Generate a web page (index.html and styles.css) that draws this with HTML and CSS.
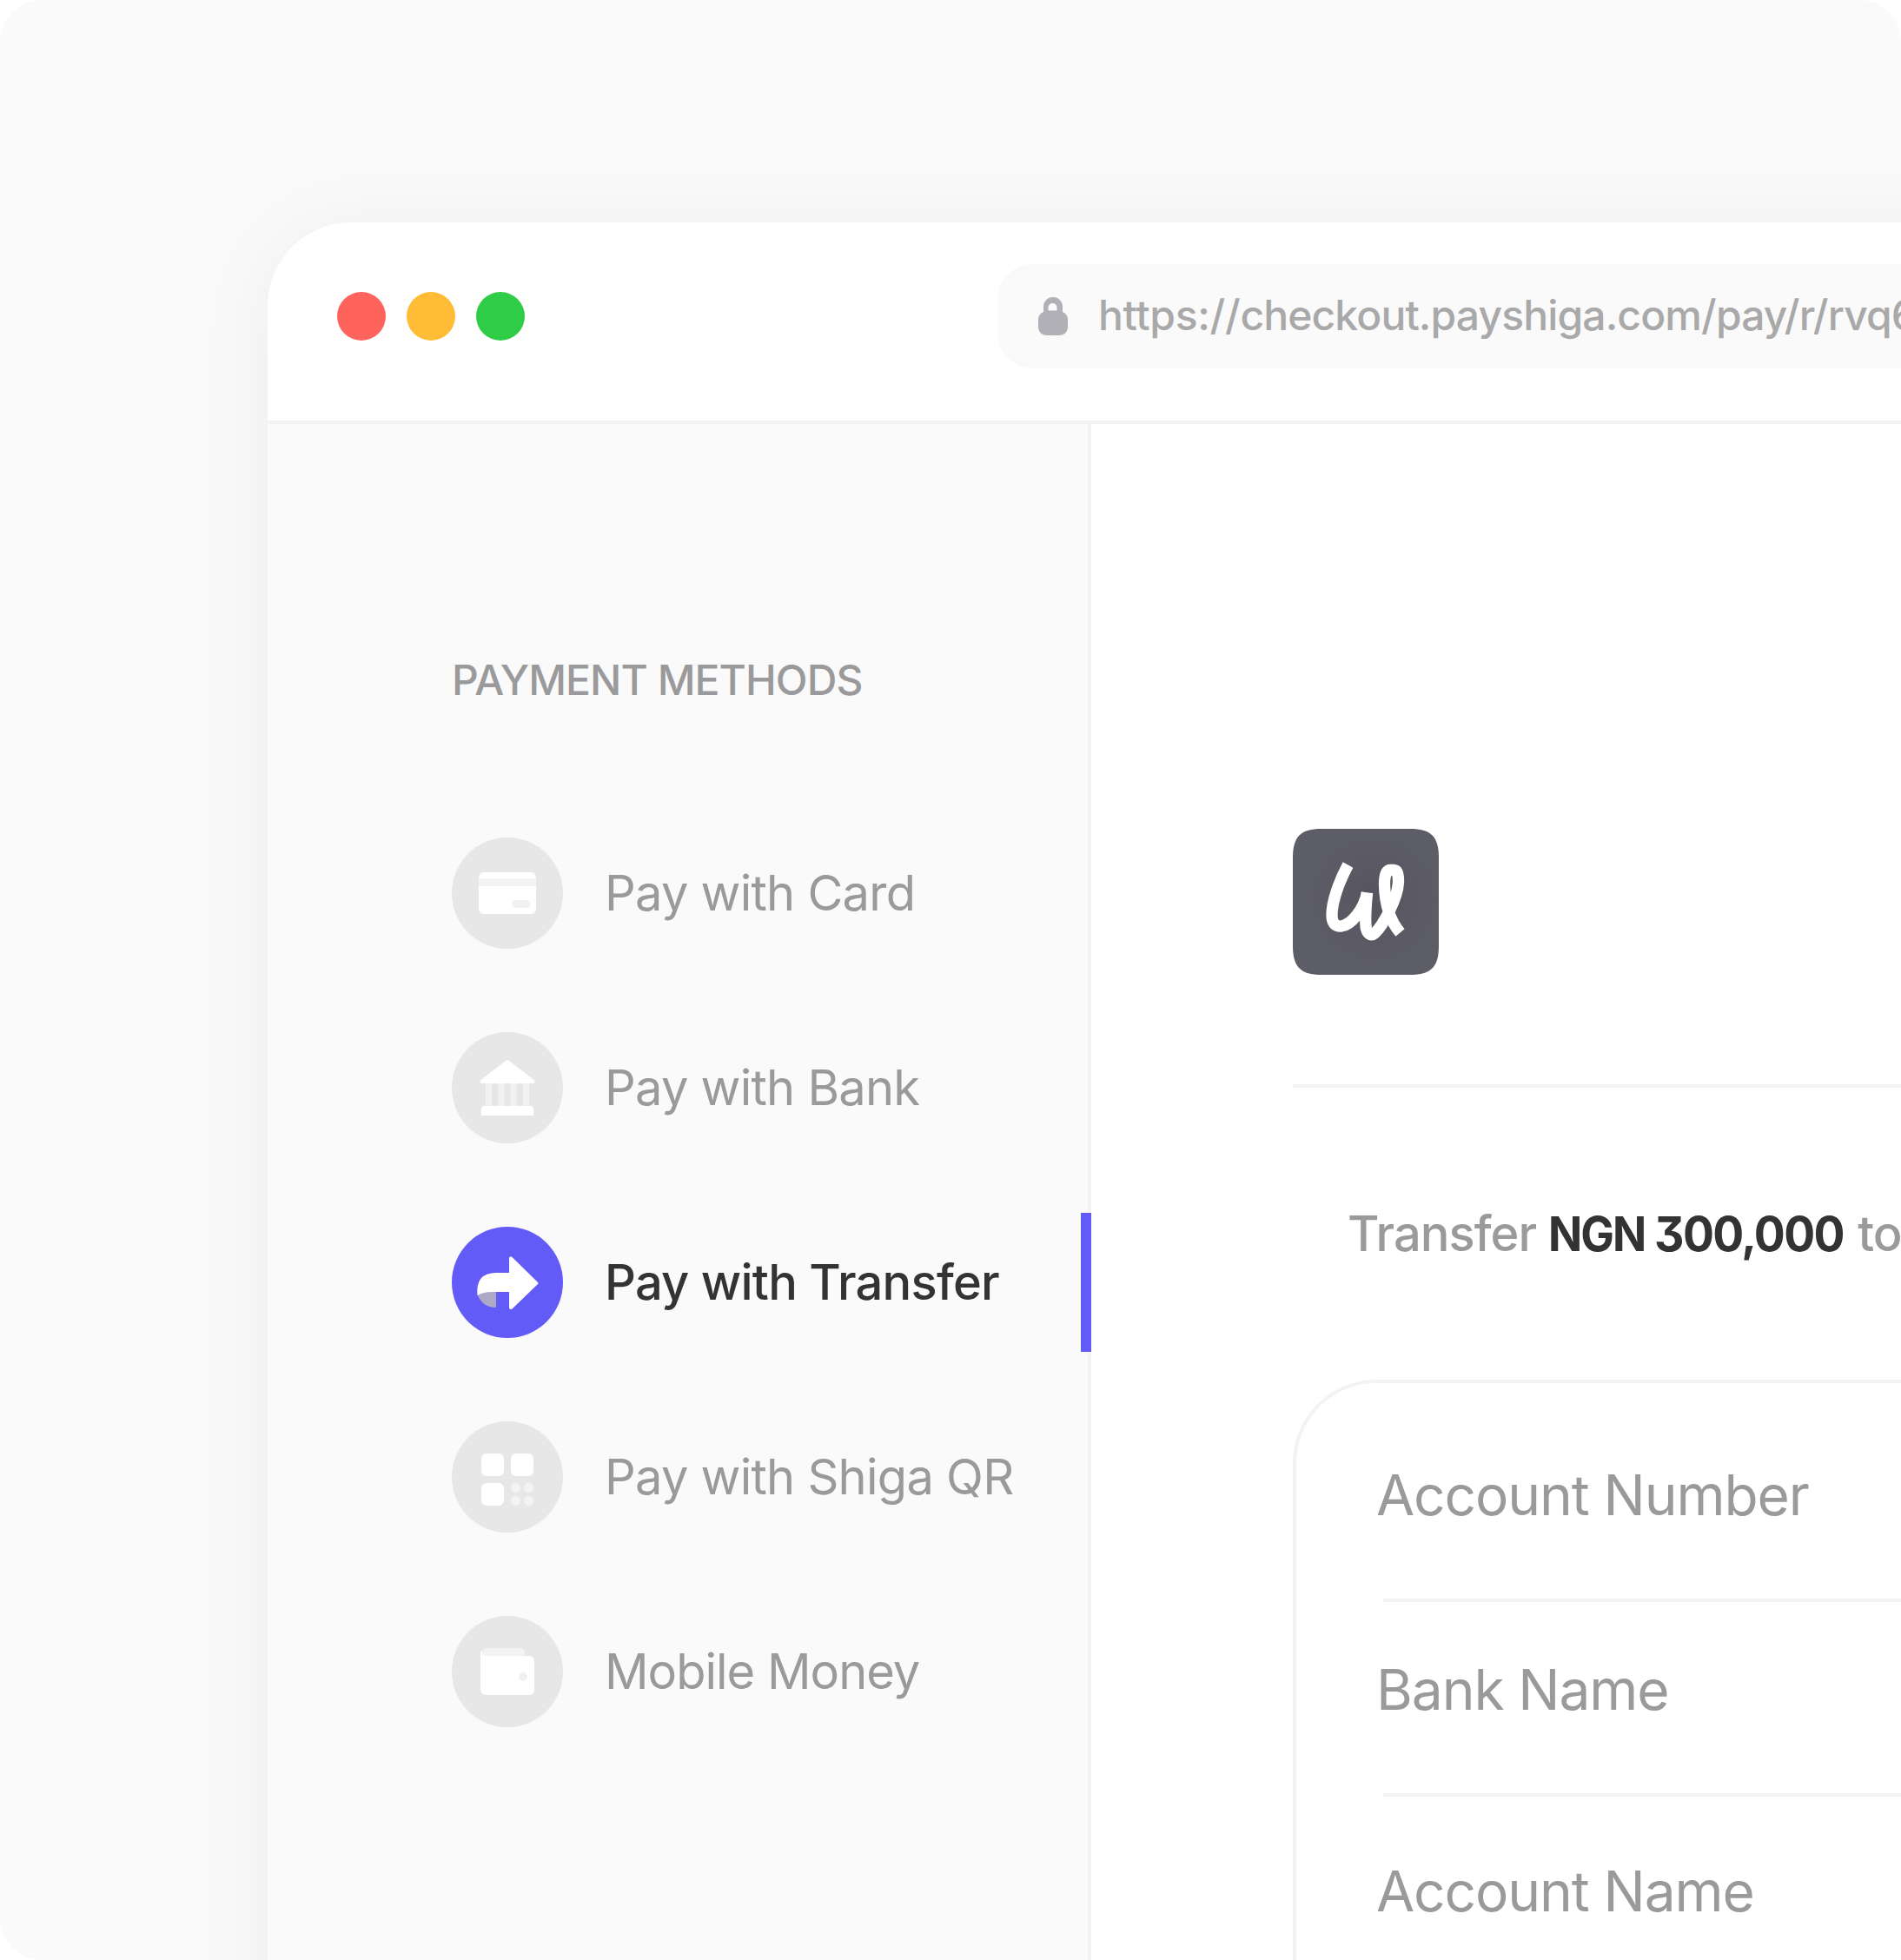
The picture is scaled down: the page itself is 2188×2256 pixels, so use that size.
FILE: index.html
```html
<!DOCTYPE html>
<html lang="en">
<head>
<meta charset="utf-8">
<title>Checkout</title>
<link rel="stylesheet" href="styles.css">
</head>
<body>
<div class="stage">
  <div class="window">
    <header class="toolbar">
      <div class="lights">
        <span class="light light-red"></span>
        <span class="light light-amber"></span>
        <span class="light light-green"></span>
      </div>
      <div class="address">
        <svg class="lock" viewBox="0 0 34 44" width="34" height="44">
          <path fill="#b0b0b6" fill-rule="evenodd" d="M6 17V11a11 11 0 0 1 22 0v6c4 2 6 4.500 6 8.500V33c0 7-3.500 11-10.500 11h-13C3.500 44 0 40 0 33v-7.500C0 21.500 2 19 6 17z"/>
          <path fill="#fafafa" d="M11.500 15.500v-3.500a5 5 0 0 1 10 0v3.500z"/>
        </svg>
        <span class="url"><span class="scheme">https://</span>checkout.payshiga.com/pay/r/rvq6</span>
      </div>
    </header>
    <div class="body">
      <nav class="sidebar">
        <h2 class="sidebar-title">PAYMENT METHODS</h2>
        <ul class="methods">
          <li class="method">
            <svg class="method-icon" viewBox="0 0 128 128">
              <circle cx="64" cy="64" r="64" fill="#e7e7e7"/>
              <rect x="31" y="40" width="66" height="48" rx="6" fill="#fff"/>
              <rect x="31" y="47" width="66" height="9" fill="#f3f3f3"/>
              <rect x="69.500" y="72" width="21" height="9" rx="4.500" fill="#f1f1f1"/>
            </svg>
            <span>Pay with Card</span>
          </li>
          <li class="method">
            <svg class="method-icon" viewBox="0 0 128 128">
              <circle cx="64" cy="64" r="64" fill="#e7e7e7"/>
              <path fill="#f2f2f2" d="M39 58h7v28h-7zM53.500 58h7v28h-7zM67.500 58h7v28h-7zM82 58h7v28h-7z"/>
              <path fill="#fff" d="M62.500 32.500q1.500-1 3 0L95 55.500q1.500 3.500-1.500 3.500h-59q-3 0-1.500-3.500z"/>
              <path fill="#fff" d="M36 85h56q2 1 2 3v7q0 1-1 1H35q-1 0-1-1v-7q0-2 2-3z"/>
            </svg>
            <span>Pay with Bank</span>
          </li>
          <li class="method method-active">
            <svg class="method-icon" viewBox="0 0 128 128">
              <circle cx="64" cy="64" r="64" fill="#625bf8"/>
              <path fill="#acaac6" d="M51 75v18C40 93 33 87 29.500 78Q36 74.500 51 75z"/>
              <path fill="#fff" d="M66 53V36q1-3 3.500-1L98.500 63.500q2 1.500 0 3L69.500 94.500Q67 96 66 93.500V75H48q-12 0-18.500 4Q27 53 51 53z"/>
            </svg>
            <span>Pay with Transfer</span>
          </li>
          <li class="method">
            <svg class="method-icon" viewBox="0 0 128 128">
              <circle cx="64" cy="64" r="64" fill="#e7e7e7"/>
              <g fill="#fff">
                <rect x="34" y="37" width="26" height="26" rx="6"/>
                <rect x="68" y="37" width="26" height="26" rx="6"/>
                <rect x="34" y="71" width="26" height="26" rx="6"/>
              </g>
              <g fill="#f3f3f3">
                <rect x="68" y="71" width="11" height="11" rx="5"/>
                <rect x="83" y="71" width="11" height="11" rx="5"/>
                <rect x="68" y="86" width="11" height="11" rx="5"/>
                <rect x="83" y="86" width="11" height="11" rx="5"/>
              </g>
            </svg>
            <span>Pay with Shiga QR</span>
          </li>
          <li class="method method-tight">
            <svg class="method-icon" viewBox="0 0 128 128">
              <circle cx="64" cy="64" r="64" fill="#e7e7e7"/>
              <path fill="#fff" d="M33 42q2-3 4-2l4 6h48q6 0 6 7v31q0 7-6 7H40q-7 0-7-7z"/>
              <path fill="#f3f3f3" d="M40 37h38q6 0 6 6v3H39c-6 0-6-9 1-9z"/>
              <circle cx="82" cy="70" r="5" fill="#f1f1f1"/>
            </svg>
            <span>Mobile Money</span>
          </li>
        </ul>
      </nav>
      <main class="checkout">
        <svg class="logo" viewBox="0 0 168 168">
          <defs>
            <radialGradient id="tile" cx="0.560" cy="0.480" r="0.480">
              <stop offset="0" stop-color="#56555f"/>
              <stop offset="1" stop-color="#5d5d68"/>
            </radialGradient>
          </defs>
          <path fill="url(#tile)" d="M0 33C0 9 9 0 33 0h102c24 0 33 9 33 33v102c0 24-9 33-33 33H33c-24 0-33-9-33-33z"/>
          <g fill="none" stroke="#fff" stroke-width="13.300" stroke-linejoin="round">
            <path d="M63.500 41.500C53 61 45 84 45 99C45 109 49 112.500 56 112C67 110.500 82 93 85.500 73.500"/>
            <path d="M85.500 73.500C84 90 83 108 84.500 115C86 121 90 124 94.500 120C103 112 121.500 80 121.500 60C121.500 45 117 47.500 112.500 47.500C106.500 47.500 105.500 56 105.500 64C106 88 112 106 123.500 119.500"/>
          </g>
        </svg>
        <hr class="rule">
        <p class="instruction">Transfer <strong class="amount"><span class="currency">NGN</span><span class="value">300,000</span></strong><span>to</span></p>
        <section class="details">
          <div class="detail">Account Number</div>
          <div class="detail">Bank Name</div>
          <div class="detail">Account Name</div>
        </section>
      </main>
    </div>
  </div>
</div>
</body>
</html>
```
FILE: styles.css
```css
* { box-sizing: border-box; }

body {
  margin: 0;
  background: #fff;
  font-family: Inter, "Liberation Sans", sans-serif;
  color: #9a9a9c;
}

.stage {
  width: 2188px;
  height: 2256px;
  padding: 256px 0 0 308px;
  overflow: hidden;
  border-radius: 48px;
  background: #fafafa;
}

.window {
  display: flex;
  flex-direction: column;
  width: 2100px;
  height: 2200px;
  overflow: hidden;
  border-radius: 96px;
  background: #fff;
  box-shadow: 0 8px 96px rgba(0, 0, 0, 0.06);
}

/* Browser toolbar */
.toolbar {
  display: flex;
  flex: none;
  align-items: center;
  height: 232px;
  padding: 48px 0 60px 80px;
  border-bottom: 4px solid #f3f3f3;
}

.lights { display: flex; gap: 24px; }
.light { width: 56px; height: 56px; border-radius: 50%; }
.light-red { background: #ff645c; }
.light-amber { background: #ffbd37; }
.light-green { background: #2fcd47; }

.address {
  display: flex;
  flex: 1;
  align-items: center;
  gap: 35px;
  height: 120px;
  margin-left: 544px;
  padding-left: 47px;
  border-radius: 40px;
  background: #fafafa;
}

.lock { flex: none; }

.url {
  padding-bottom: 3px;
  color: #a9a9aa;
  font-size: 48px;
  font-weight: 500;
  line-height: 64px;
  letter-spacing: -0.87px;
  white-space: nowrap;
}

.scheme { letter-spacing: -0.3px; }

.body { display: flex; flex: 1; }

/* Payment methods */
.sidebar {
  flex: none;
  width: 948px;
  padding: 263px 0 0 212px;
  border-right: 4px solid #f3f3f3;
  background: #fafafa;
}

.sidebar-title {
  margin: 0 0 149px;
  font-size: 48px;
  font-weight: 500;
  line-height: 64px;
  letter-spacing: -0.93px;
}

.methods {
  display: flex;
  flex-direction: column;
  gap: 96px;
  margin: 0;
  padding: 0;
  list-style: none;
}

.method {
  position: relative;
  display: flex;
  align-items: center;
  gap: 48px;
  height: 128px;
  font-size: 56px;
  letter-spacing: -0.75px;
  white-space: nowrap;
}

.method-tight { letter-spacing: -1px; }

.method-icon { flex: none; width: 128px; height: 128px; }

.method-active { color: #333; font-weight: 500; }

.method-active::after {
  content: "";
  position: absolute;
  top: -16px;
  right: -4px;
  bottom: -16px;
  width: 12px;
  background: #625bf8;
}

/* Transfer details */
.checkout { flex: 1; padding: 466px 0 0 232px; }

.logo { display: block; width: 168px; height: 168px; }

.rule {
  height: 4px;
  margin: 126px 0 0;
  border: 0;
  background: #f3f3f3;
}

.instruction {
  display: flex;
  align-items: baseline;
  margin: 132px 0 0;
  padding-left: 63px;
  font-size: 56px;
  font-weight: 500;
  line-height: 72px;
  letter-spacing: -0.95px;
  white-space: nowrap;
}

.amount {
  display: flex;
  width: 356px;
  margin-left: 14px;
  color: #333;
  font-size: 54.5px;
  font-weight: 700;
  font-feature-settings: "cv09";
}

.currency,
.value {
  transform-origin: left;
}

.currency {
  width: 122px;
  letter-spacing: -2.1px;
  transform: scaleX(0.945);
}

.value {
  letter-spacing: -1.65px;
  transform: scaleX(0.98);
}

.details {
  height: 900px;
  margin-top: 132px;
  padding-left: 92px;
  border: 4px solid #f3f3f3;
  border-radius: 96px;
}

.detail {
  padding: 61px 0 83px;
  background: linear-gradient(#f3f3f3, #f3f3f3) 8px 100% / 100% 4px no-repeat;
  font-size: 64px;
  line-height: 80px;
  letter-spacing: -1.08px;
}

.detail:first-child { padding-top: 89px; }
.detail:last-child { padding-top: 69px; background: none; }
```
